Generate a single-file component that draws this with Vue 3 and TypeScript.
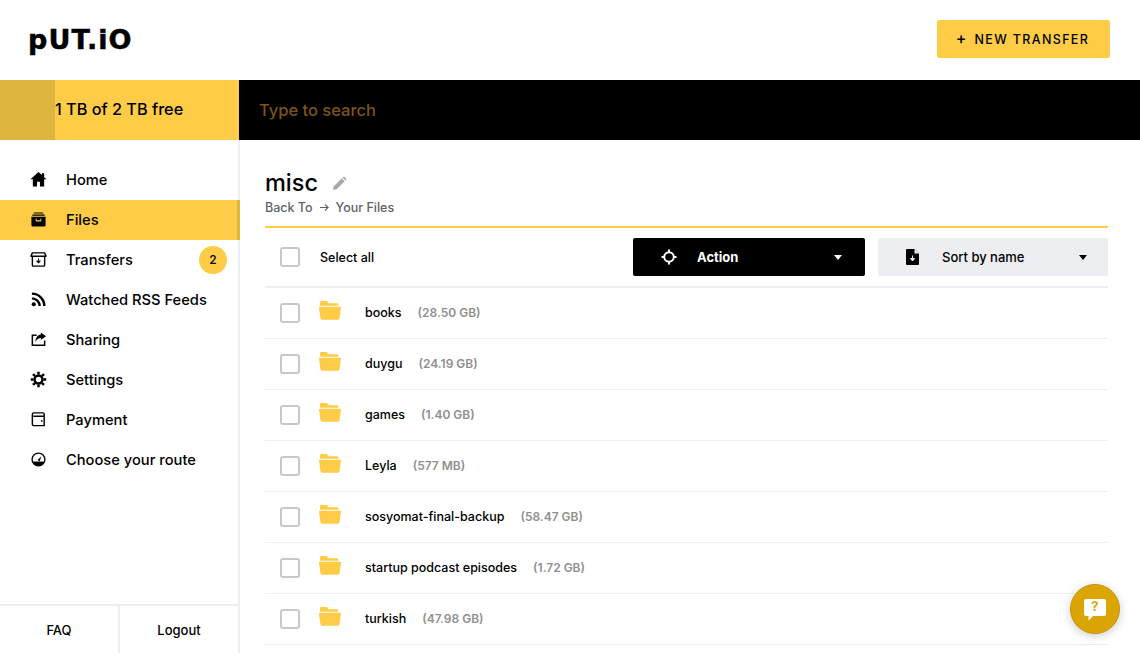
<template>
  <div class="app">
    <header class="top">
      <div class="logo">p<span class="up">ut</span>.i<span class="up">o</span></div>
      <button class="new-transfer"><span class="plus">+</span> NEW TRANSFER</button>
    </header>

    <div class="bar">
      <div class="storage">
        <div class="used"></div>
        <div class="free">1 TB of 2 TB free</div>
      </div>
      <input class="search" placeholder="Type to search" />
    </div>

    <div class="body">
      <aside class="side">
        <nav class="nav">
          <a v-for="item in navItems" :key="item.label" class="nav-item" :class="{ active: item.active }">
            <svg class="nav-icon" viewBox="0 0 18 18" v-html="item.icon"></svg>
            <span class="nav-label">{{ item.label }}</span>
            <span v-if="item.badge" class="badge">{{ item.badge }}</span>
          </a>
        </nav>
        <div class="side-foot">
          <a class="foot-link">FAQ</a>
          <a class="foot-link">Logout</a>
        </div>
      </aside>

      <main class="main">
        <div class="title-row">
          <h1 class="title">misc</h1>
          <svg class="pencil" viewBox="0 0 16 16">
            <path d="M1 15l1-4 8.500-8.500 3 3L5 14z" fill="#a9a9a9" />
            <path d="M11.300 1.700l.7-.7a1 1 0 0 1 1.400 0l1.600 1.600a1 1 0 0 1 0 1.400l-.7.7z" fill="#a9a9a9" />
          </svg>
        </div>
        <div class="crumbs">
          <span>Back To</span>
          <svg class="arrow" viewBox="0 0 10 10">
            <path d="M0 5h9M5.500 1.500L9 5 5.500 8.500" fill="none" stroke="#5f6368" stroke-width="1.300" />
          </svg>
          <span>Your Files</span>
        </div>

        <div class="toolbar">
          <span class="check"></span>
          <span class="select-all">Select all</span>
          <button class="drop action">
            <svg class="drop-icon" viewBox="0 0 16 16" fill="none" stroke="#fff" stroke-width="2">
              <circle cx="8" cy="8" r="4.800" />
              <path d="M8 .5v3.500M8 12v3.500M.5 8H4M12 8h3.500" />
            </svg>
            <span class="drop-label">Action</span>
            <span class="caret"></span>
          </button>
          <button class="drop sort">
            <svg class="drop-icon file" viewBox="0 0 13 16">
              <path d="M1 0h7.500L13 4.500V15a1 1 0 0 1-1 1H1a1 1 0 0 1-1-1V1a1 1 0 0 1 1-1z" fill="#000" />
              <path d="M8.500 0v4.500H13" fill="#eceef2" />
              <path d="M6.500 6.500v4M4.500 9.500l2 2.500 2-2.500z" fill="#eceef2" stroke="#eceef2" />
            </svg>
            <span class="drop-label">Sort by name</span>
            <span class="caret"></span>
          </button>
        </div>

        <ul class="files">
          <li v-for="file in files" :key="file.name" class="file-row">
            <span class="check"></span>
            <svg class="folder" viewBox="0 0 21 18">
              <path d="M2 0h5.500l1.500 2h8.500a1 1 0 0 1 1 1v1.500H1V1a1 1 0 0 1 1-1z" fill="#fecc47" />
              <path d="M.6 5.500h19.800a.6.6 0 0 1 .6.7l-1.400 10.300a1.500 1.500 0 0 1-1.500 1.300H2.900a1.500 1.500 0 0 1-1.500-1.300L0 6.200a.6.6 0 0 1 .6-.7z" fill="#fecc47" />
            </svg>
            <span class="file-name">{{ file.name }}</span>
            <span class="file-size">({{ file.size }})</span>
          </li>
        </ul>
      </main>
    </div>

    <button class="help">
      <svg viewBox="0 0 24 24" class="help-icon">
        <path d="M3 1h18a2 2 0 0 1 2 2v13a2 2 0 0 1-2 2H10l-4.500 4.500V18H3a2 2 0 0 1-2-2V3a2 2 0 0 1 2-2z" fill="#fff" />
      </svg>
      <span class="help-mark">?</span>
    </button>
  </div>
</template>

<script setup lang="ts">
interface NavItem {
  label: string;
  icon: string;
  active?: boolean;
  badge?: number;
}

interface FileItem {
  name: string;
  size: string;
}

const navItems: NavItem[] = [
  {
    label: 'Home',
    icon: '<path d="M9 1L.5 8.800h2.500V16.500h4.500v-5h3v5H15V8.800h2.500L15 6.500V2.500h-2.500v1.700z" fill="#000"/>'
  },
  {
    label: 'Files',
    active: true,
    icon: '<path d="M4 1.500h10v1.200H4zM2.500 3.700h13v1.300h-13z" fill="#000"/><path fill-rule="evenodd" d="M1.500 6h15v9a1.500 1.500 0 0 1-1.500 1.500H3A1.500 1.500 0 0 1 1.500 15zM6 8v2a1 1 0 0 0 1 1h4a1 1 0 0 0 1-1V8h-1v1.700H7V8z" fill="#000"/>'
  },
  {
    label: 'Transfers',
    badge: 2,
    icon: '<path d="M2.500 6v9a1 1 0 0 0 1 1h11a1 1 0 0 0 1-1V6M1 5.500L2.500 2h13L17 5.500z" fill="none" stroke="#000" stroke-width="1.500" stroke-linejoin="round"/><path d="M9 7.500v3.500M7 10.500h4L9 13z" fill="#000" stroke="#000" stroke-width=".8"/>'
  },
  {
    label: 'Watched RSS Feeds',
    icon: '<circle cx="4" cy="14" r="2.200" fill="#000"/><path d="M2 7.800a8.200 8.200 0 0 1 8.200 8.200M2 2.800A13.200 13.200 0 0 1 15.200 16" fill="none" stroke="#000" stroke-width="2.600"/>'
  },
  {
    label: 'Sharing',
    icon: '<path d="M7 4.500H2.500v10.500h13v-5" fill="none" stroke="#000" stroke-width="1.600"/><path d="M11.500 1.500L17 5.500l-5.500 4V7.300C9 7.300 7 8.500 5.800 11.500c0-4.500 2.300-7.300 5.700-7.700z" fill="#000"/>'
  },
  {
    label: 'Settings',
    icon: '<circle cx="9" cy="9" r="4.200" fill="none" stroke="#000" stroke-width="2.600"/><path d="M9 .8v3M9 14.200v3M.8 9h3M14.200 9h3M3.200 3.200l2.100 2.100M12.700 12.700l2.100 2.100M3.200 14.800l2.100-2.100M12.700 5.300l2.100-2.100" stroke="#000" stroke-width="2.600"/>'
  },
  {
    label: 'Payment',
    icon: '<path d="M15.500 5.500H3.500M2.500 6.500V3.500a1.500 1.500 0 0 1 1.500-1.500h9.500a1.500 1.500 0 0 1 1.500 1.500v12H4a1.500 1.500 0 0 1-1.500-1.500V6" fill="none" stroke="#000" stroke-width="1.500"/><circle cx="12.500" cy="10.500" r=".9" fill="#000"/>'
  },
  {
    label: 'Choose your route',
    icon: '<path fill-rule="evenodd" d="M9 1.500a7.500 7.500 0 1 1 0 15 7.500 7.500 0 0 1 0-15zM9 3a6 6 0 0 0-5.500 8.500h11A6 6 0 0 0 9 3z" fill="#000"/><path d="M3.500 11.500h11L13 14l-4 1-4-1z" fill="#000"/><path d="M8 9.500l4-4-1.800 5.500z" fill="#000"/>'
  }
];

const files: FileItem[] = [
  { name: 'books', size: '28.50 GB' },
  { name: 'duygu', size: '24.19 GB' },
  { name: 'games', size: '1.40 GB' },
  { name: 'Leyla', size: '577 MB' },
  { name: 'sosyomat-final-backup', size: '58.47 GB' },
  { name: 'startup podcast episodes', size: '1.72 GB' },
  { name: 'turkish', size: '47.98 GB' }
];
</script>

<style>
html,
body {
  margin: 0;
  height: 100%;
  overflow: hidden;
  background: #fff;
}
</style>

<style scoped>
.app {
  width: 1140px;
  height: 653px;
  overflow: hidden;
  position: relative;
  display: flex;
  flex-direction: column;
  font-family: Inter, "Noto Sans", sans-serif;
  color: #000;
}

.top {
  height: 78px;
  padding: 0 30px 2px 28px;
  flex-shrink: 0;
  display: flex;
  align-items: center;
  justify-content: space-between;
}

.logo {
  font-family: "DejaVu Sans", sans-serif;
  font-weight: 700;
  font-size: 27px;
  letter-spacing: 1.100px;
  line-height: 1;
  margin-top: 1px;
  -webkit-text-stroke: 0.5px #000;
}

.logo .up {
  text-transform: uppercase;
}

.new-transfer {
  width: 173px;
  height: 38px;
  background: #fecc47;
  border: none;
  border-radius: 2px;
  font: 500 12.500px Inter, sans-serif;
  letter-spacing: 1.350px;
  color: #000;
  padding: 0 2px 3px 0;
}

.plus {
  font-size: 16px;
  margin-right: 2px;
}

.bar {
  height: 60px;
  flex-shrink: 0;
  display: flex;
  background: #000;
}

.storage {
  width: 239px;
  display: flex;
  background: #fecc47;
}

.used {
  width: 55px;
  background: #deb53e;
}

.free {
  line-height: 58px;
  font-size: 16.250px;
  font-weight: 500;
  white-space: nowrap;
}

.search {
  flex: 1;
  background: transparent;
  border: none;
  outline: none;
  padding: 0 0 0 20px;
  font: 500 16.500px Inter, sans-serif;
  color: #fff;
}

.search::placeholder {
  color: #7d5415;
  opacity: 1;
}

.body {
  flex: 1;
  display: flex;
  min-height: 0;
}

.side {
  width: 240px;
  box-sizing: border-box;
  flex-shrink: 0;
  border-right: 2px solid #eceef2;
  display: flex;
  flex-direction: column;
  justify-content: space-between;
  padding-top: 20px;
}

.nav {
  display: flex;
  flex-direction: column;
}

.nav-item {
  height: 40px;
  padding: 0 13px 0 30px;
  display: flex;
  align-items: center;
  font-size: 14.700px;
  font-weight: 500;
  margin-right: -2px;
}

.nav-item.active {
  background: #fecc47;
  border-right: 3px solid #deb53e;
  padding-right: 10px;
}

.nav-icon {
  width: 17px;
  height: 17px;
  margin: -2px 19px 0 0;
  flex-shrink: 0;
}

.nav-label {
  flex: 1;
  white-space: nowrap;
  margin-top: -1px;
}

.badge {
  width: 28px;
  height: 28px;
  border-radius: 50%;
  background: #fecc47;
  font-size: 12px;
  line-height: 28px;
  text-align: center;
}

.side-foot {
  display: flex;
  height: 47px;
  border-top: 2px solid #eceef2;
}

.foot-link {
  flex: 1;
  text-align: center;
  font-size: 13px;
  font-weight: 500;
  line-height: 48px;
}

.foot-link + .foot-link {
  border-left: 2px solid #eceef2;
}

.main {
  flex: 1;
  min-width: 0;
  padding: 25px 32px 0 25px;
}

.title-row {
  display: flex;
  align-items: center;
  height: 36px;
}

.title {
  margin: 0;
  font-size: 23.500px;
  font-weight: 500;
  line-height: 36px;
}

.pencil {
  width: 15px;
  height: 15px;
  margin-left: 14px;
}

.crumbs {
  display: flex;
  align-items: center;
  gap: 7px;
  height: 18px;
  margin-top: -3px;
  font-size: 12.500px;
  font-weight: 500;
  color: #5f6368;
}

.arrow {
  width: 9px;
  height: 9px;
}

.toolbar {
  margin-top: 10px;
  height: 58px;
  border-top: 2px solid #fecc47;
  border-bottom: 2px solid #eceef2;
  display: flex;
  align-items: center;
  padding-left: 15px;
}

.check {
  width: 16px;
  height: 16px;
  border: 2px solid #c8c8c8;
  border-radius: 3px;
  flex-shrink: 0;
}

.select-all {
  flex: 1;
  margin-left: 20px;
  font-size: 12.500px;
  font-weight: 500;
}

.drop {
  height: 38px;
  border: none;
  border-radius: 2px;
  display: flex;
  align-items: center;
  font: 500 13px Inter, sans-serif;
  padding: 0 23px 0 28px;
  box-sizing: border-box;
}

.action {
  width: 232px;
  background: #000;
  color: #fff;
  font-weight: 700;
}

.sort {
  width: 230px;
  margin-left: 13px;
  padding-right: 21px;
  background: #eceef2;
  color: #000;
}

.drop-icon {
  width: 16px;
  height: 16px;
  margin: -1px 20px 0 0;
  flex-shrink: 0;
}

.drop-icon.file {
  width: 13px;
  margin-right: 23px;
}

.drop-label {
  flex: 1;
  text-align: left;
  padding-bottom: 1px;
}

.caret {
  width: 0;
  height: 0;
  border-left: 4px solid transparent;
  border-right: 4px solid transparent;
  border-top: 5px solid currentColor;
}

.files {
  list-style: none;
  margin: 0;
  padding: 0;
}

.file-row {
  height: 50px;
  border-bottom: 1px solid #eceef2;
  display: flex;
  align-items: center;
  padding-left: 15px;
  font-size: 12.500px;
  font-weight: 500;
}

.folder {
  width: 22px;
  height: 19px;
  margin: -5px 24px 0 19px;
  flex-shrink: 0;
}

.file-name {
  padding-bottom: 2px;
}

.file-size {
  margin-left: 16px;
  padding-bottom: 2px;
  color: #8f8f8f;
  font-size: 12px;
  font-weight: 600;
}

.help {
  position: absolute;
  left: 1070px;
  top: 584px;
  width: 50px;
  height: 50px;
  box-sizing: border-box;
  padding: 0;
  border-radius: 50%;
  border: 1px solid #c9930a;
  background: #dba604;
  box-shadow: 0 2px 10px rgba(0, 0, 0, 0.2);
  display: flex;
  align-items: center;
  justify-content: center;
}

.help-icon {
  width: 24px;
  height: 24px;
  margin-top: 2px;
}

.help-mark {
  position: absolute;
  left: 0;
  right: 0;
  top: 13px;
  text-align: center;
  font: 700 13px Inter, sans-serif;
  color: #dba604;
}
</style>
